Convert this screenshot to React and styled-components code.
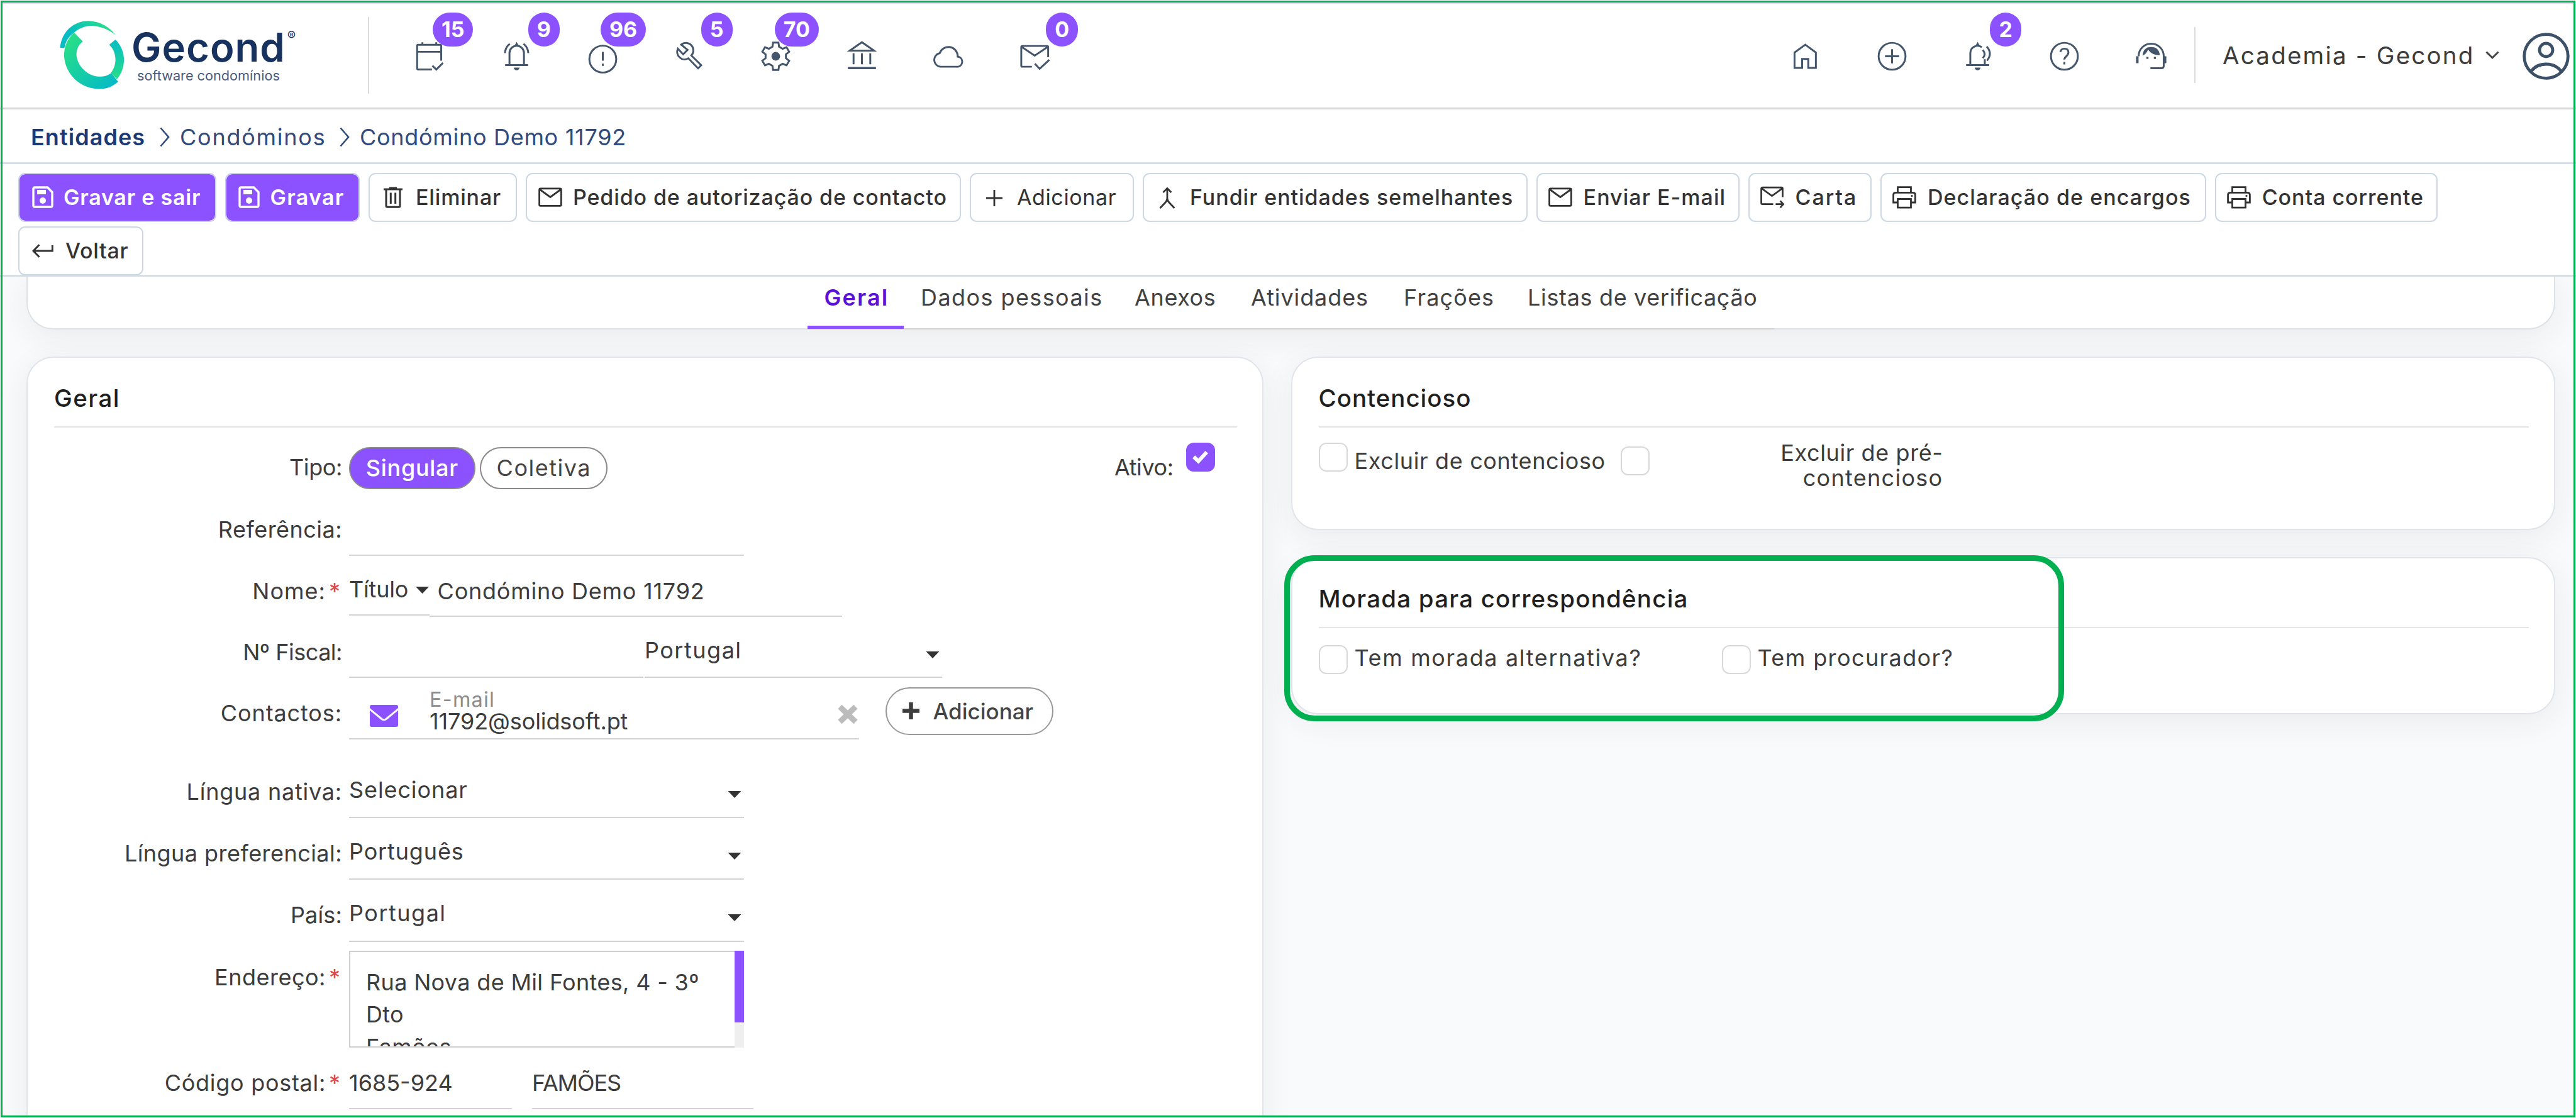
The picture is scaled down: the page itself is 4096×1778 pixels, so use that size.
import React from 'react';
import styled, { createGlobalStyle } from 'styled-components';

const NavIcon = ({ name }) => (
    <NavSvg viewBox="0 0 24 24">{navShapes[name]}</NavSvg>
);

const navShapes = {
    calendar: (
        <path d="M13.4 20.8H4.2Q3.5 20.8 3.5 20.1V5Q3.5 4.3 4.2 4.3H18.9Q19.6 4.3 19.6 5V14.9M3.5 9H19.6M7 2.6V4.3M16.3 2.6V4.3M13.7 18.3L16.3 20.9L20.8 16.4" />
    ),
    bell: (
        <>
            <path d="M7.2 17.9V9.8A4.85 4.85 0 0 1 16.9 9.8V17.9M4.3 17.9H19.7M7.4 3.6Q4.4 6 4.2 9.9M16.6 3.6Q19.6 6 19.8 9.9" />
            <path className="fill" d="M10 19.6H14Q13.5 21.4 12 21.4Q10.5 21.4 10 19.6ZM12 2.3L13.5 5H10.5Z" />
        </>
    ),
    alert: (
        <>
            <circle cx="12" cy="13.9" r="9" />
            <path d="M12 9.1V14.9M12 16.9V18.4" />
        </>
    ),
    wrench: (
        <path d="M6.8 4.2L11.1 7.7L8.1 10.7L4.6 6.9A5 5 0 0 0 11.6 13.4L18.1 20.1L20.2 18L13.6 11.5A5 5 0 0 0 6.8 4.2Z" />
    ),
    gear: (
        <>
            <path d="M10.2 2.8H13.8L14.2 5.6L16.6 7L19.2 5.9L21 9L18.8 10.7V13.3L21 15L19.2 18.1L16.6 17L14.2 18.4L13.8 21.2H10.2L9.8 18.4L7.4 17L4.8 18.1L3 15L5.2 13.3V10.7L3 9L4.8 5.9L7.4 7L9.8 5.6Z" />
            <circle className="fill" cx="12" cy="12" r="2.9" />
        </>
    ),
    bank: (
        <>
            <path d="M3.9 8.2L12 2.6L20.1 8.2ZM6.4 10V17.4M12 10V17.4M17.6 10V17.4" />
            <path d="M2.6 19.9H21.4" strokeWidth="1.5" />
        </>
    ),
    cloud: <path d="M6.6 19A4.6 4.6 0 0 1 6 9.9A6.2 6.2 0 0 1 18 11.3V12.2A3.45 3.45 0 0 1 18.3 19Z" />,
    mailCheck: (
        <path d="M10 19H3.6Q2.9 19 2.9 18.3V5.8Q2.9 5.1 3.6 5.1H20.2Q20.9 5.1 20.9 5.8V12.6M3.3 5.8L11.9 11.6L20.5 5.8M12 17L15.2 20.4L21.7 14.4" />
    ),
    home: <path d="M4.8 19.8V9.5L12 4.2L19.1 9.5V19.8H14V13.8H9.9V19.8Z" />,
    plus: (
        <>
            <circle cx="12" cy="12" r="9" />
            <path d="M12 7.3V16.7M7.3 12H16.7" />
        </>
    ),
    bellRing: (
        <>
            <path d="M6.7 17.9V9.8A4.9 4.9 0 0 1 14.4 5.9M16.4 14V17.9M3.9 17.9H19.3M15 7.8Q17.6 10.5 15 13.3M17.7 5.5Q21.8 10.2 17.9 14.9" />
            <path className="fill" d="M9.6 19.6H13.6Q13.1 21.4 11.6 21.4Q10.1 21.4 9.6 19.6ZM11.6 2.3L13.1 5H10.1Z" />
        </>
    ),
    help: (
        <>
            <circle cx="12" cy="12" r="9" />
            <path d="M9.3 9.2Q9.7 6.9 12 6.9Q14.7 6.9 14.7 9.4Q14.7 10.8 13.3 12Q12 13 12 14.2M12 15.8V17.5" />
        </>
    ),
    agent: (
        <>
            <path d="M3.6 12V11.8A8.4 8.2 0 0 1 20.4 11.8V18.4Q20.4 20 18.8 20H11.5" />
            <path d="M2.7 12V16.6M21.3 12V16.6" strokeWidth="1.7" />
            <path className="fill" d="M6.2 11.6Q8.8 10.6 9.9 7.6Q12.4 11.3 17.8 11.3Q17.2 5.8 12 5.8Q6.7 5.8 6.2 11.6ZM8.8 12.4H10.2V13.8H8.8ZM13.8 12.4H15.2V13.8H13.8Z" />
        </>
    ),
};

const SaveIcon = () => (
    <svg width="34" height="35" viewBox="0 0 34 35" fill="none" stroke="currentColor" strokeWidth="3.4">
        <path d="M4 2H24.5L32 9.5V31Q32 33 30 33H4Q2 33 2 31V4Q2 2 4 2Z" />
        <path d="M8 9.5H22" strokeWidth="7" />
        <circle cx="17" cy="23" r="5" fill="currentColor" stroke="none" />
    </svg>
);

const TrashIcon = () => (
    <svg width="30" height="34" viewBox="0 0 30 34" fill="none" stroke="currentColor" strokeWidth="3">
        <path d="M0 4H30M9 2H21M4 4V30.5Q4 32.3 6 32.3H24Q26 32.3 26 30.5V4M11.3 9.5V27M18.7 9.5V27" />
    </svg>
);

const MailIcon = () => (
    <svg width="38" height="31" viewBox="0 0 38 31" fill="none" stroke="currentColor" strokeWidth="2.8">
        <path d="M3.5 1.8H34.5Q36.4 1.8 36.4 3.7V27.5Q36.4 29.3 34.5 29.3H3.5Q1.6 29.3 1.6 27.5V3.7Q1.6 1.8 3.5 1.8ZM2.5 3.5L19 15.5L35.5 3.5" />
    </svg>
);

const LetterIcon = () => (
    <svg width="40" height="36" viewBox="0 0 40 36" fill="none" stroke="currentColor" strokeWidth="2.8">
        <path d="M21 29H3.5Q1.6 29 1.6 27V3.7Q1.6 1.8 3.5 1.8H34.5Q36.4 1.8 36.4 3.7V17.5M2.5 3.5L19 15.5L35.5 3.5M25 29H37M32.5 23.5L37.5 29L32.5 34.5" />
    </svg>
);

const PlusIcon = () => (
    <svg width="26" height="28" viewBox="0 0 26 28" fill="none" stroke="currentColor" strokeWidth="2.8">
        <path d="M13 2V28M0 15H26" />
    </svg>
);

const MergeIcon = () => (
    <svg width="26" height="38" viewBox="0 0 26 38" fill="none" stroke="currentColor" strokeWidth="2.8">
        <path d="M6.5 11L13 4.5L19.5 11M13 5V20Q13 24 10 27L1.5 36M13 20Q13 24 16 27L24.5 36" />
    </svg>
);

const PrinterIcon = () => (
    <svg width="38" height="36" viewBox="0 0 38 36" fill="none" stroke="currentColor" strokeWidth="2.8">
        <path d="M8.5 10V1.6H29.5V10M8.5 26H1.6V14Q1.6 10.3 5.3 10.3H32.7Q36.4 10.3 36.4 14V26H29.5M8.5 20.5H29.5V34.2H8.5Z" />
        <circle cx="31" cy="15.5" r="1.6" fill="currentColor" stroke="none" />
    </svg>
);

const ReturnIcon = () => (
    <svg width="34" height="22" viewBox="0 0 34 22" fill="none" stroke="currentColor" strokeWidth="2.9">
        <path d="M11.5 1.2L2 11L11.5 20.8M2 11H32.3V2" />
    </svg>
);

const LogoMark = () => (
    <svg width="107" height="113" viewBox="30 45 345 365">
        <defs>
            <linearGradient id="ringMain" x1="0" y1="0" x2="1" y2="1">
                <stop offset="0.1" stopColor="#27de88" />
                <stop offset="0.9" stopColor="#06bcc4" />
            </linearGradient>
            <linearGradient id="ringTop" x1="0" y1="0.4" x2="1" y2="0">
                <stop offset="0.15" stopColor="#06bcc4" />
                <stop offset="0.85" stopColor="#27de88" />
            </linearGradient>
            <linearGradient id="ringSide" x1="0" y1="0" x2="0" y2="1">
                <stop offset="0" stopColor="#06bcc4" />
                <stop offset="1" stopColor="#27de88" />
            </linearGradient>
        </defs>
        <path fill="url(#ringTop)" d="M38 190C45 110 105 52 185 52C245 54 295 85 322 125C290 95 240 78 200 77C165 78 135 90 110 112C80 135 65 160 60 192Z" />
        <path fill="url(#ringSide)" d="M322 148C350 175 366 215 366 250C366 290 352 325 330 352L298 320C315 300 324 270 322 245C320 215 308 190 290 175Z" />
        <path fill="url(#ringMain)" d="M110 112C70 150 50 200 62 260C80 340 150 402 240 402C280 402 310 388 336 364L300 320C280 335 260 340 235 338C180 335 125 285 122 225C122 195 135 172 155 158Z" />
    </svg>
);

const leftNav = [
    { icon: 'calendar', badge: 15 },
    { icon: 'bell', badge: 9 },
    { icon: 'alert', badge: 96 },
    { icon: 'wrench', badge: 5 },
    { icon: 'gear', badge: 70 },
    { icon: 'bank' },
    { icon: 'cloud' },
    { icon: 'mailCheck', badge: 0 },
];

const rightNav = [
    { icon: 'home' },
    { icon: 'plus' },
    { icon: 'bellRing', badge: 2 },
    { icon: 'help' },
    { icon: 'agent' },
];

const actions = [
    { label: 'Gravar e sair', Icon: SaveIcon, width: 314.5, spacing: 0.77, primary: true },
    { label: 'Gravar', Icon: SaveIcon, width: 214.5, spacing: 1.28, primary: true },
    { label: 'Eliminar', Icon: TrashIcon, width: 236, spacing: 0.84 },
    { label: 'Pedido de autorização de contacto', Icon: MailIcon, width: 692, spacing: 0.88 },
    { label: 'Adicionar', Icon: PlusIcon, width: 261, spacing: 0.62, light: true },
    { label: 'Fundir entidades semelhantes', Icon: MergeIcon, width: 611.6, spacing: 0.95 },
    { label: 'Enviar E-mail', Icon: MailIcon, width: 323, spacing: 1.05 },
    { label: 'Carta', Icon: LetterIcon, width: 196.3, spacing: 1.9 },
    { label: 'Declaração de encargos', Icon: PrinterIcon, width: 517.8, spacing: 1.08 },
    { label: 'Conta corrente', Icon: PrinterIcon, width: 354.6, spacing: 0.95 },
    { label: 'Voltar', Icon: ReturnIcon, width: 199, spacing: 0.74 },
];

const tabs = [
    { label: 'Geral', width: 153.6, spacing: 2.1, active: true },
    { label: 'Dados pessoais', width: 340, spacing: 1.4 },
    { label: 'Anexos', width: 185, spacing: 0.6 },
    { label: 'Atividades', width: 243, spacing: 0.9 },
    { label: 'Frações', width: 197, spacing: 1.15 },
    { label: 'Listas de verificação', width: 419.4, spacing: 0.65 },
];

const NavList = ({ items }) => (
    <Nav>
        {items.map(({ icon, badge }) => (
            <NavItem key={icon}>
                <NavIcon name={icon} />
                {badge !== undefined && <Badge>{badge}</Badge>}
            </NavItem>
        ))}
    </Nav>
);

const FieldLabel = ({ children, spacing, required }) => (
    <Label $spacing={spacing}>
        {children}
        {required && <Required>*</Required>}
    </Label>
);

const SelectField = ({ value, width, spacing, compact }) => (
    <Select $width={width} $compact={compact}>
        <Value $spacing={spacing}>{value}</Value>
        <Caret $compact={compact} />
    </Select>
);

const App = () => {
    return (
        <Page>
            <GlobalStyle />
            <Header>
                <Logo>
                    <LogoMark />
                    <LogoText>
                        <Brand>Gecond<Registered>®</Registered></Brand>
                        <Tagline>software condomínios</Tagline>
                    </LogoText>
                </Logo>
                <HeaderDivider $height={122} />
                <LeftNavWrap>
                    <NavList items={leftNav} />
                </LeftNavWrap>
                <NavList items={rightNav} />
                <HeaderDivider $height={89} />
                <Account>Academia - Gecond</Account>
                <svg width="22" height="14" viewBox="0 0 22 14" fill="none" stroke="#444" strokeWidth="3">
                    <path d="M1.5 1.5L11 11L20.5 1.5" />
                </svg>
                <Avatar viewBox="0 0 75 75">
                    <circle cx="37.5" cy="37.5" r="34.8" />
                    <circle cx="37.5" cy="27.5" r="10.5" />
                    <path d="M13.5 61.5Q22 50 37.5 50Q53 50 61.5 61.5" />
                </Avatar>
            </Header>

            <Breadcrumb>
                <Crumb $bold $width={201} $spacing={1.06}>Entidades</Crumb>
                <CrumbArrow viewBox="0 0 16 32"><path d="M1.5 1.5L14 16L1.5 30.5" /></CrumbArrow>
                <Crumb $width={254} $spacing={1.75}>Condóminos</Crumb>
                <CrumbArrow viewBox="0 0 16 32"><path d="M1.5 1.5L14 16L1.5 30.5" /></CrumbArrow>
                <Crumb $spacing={0.7}>Condómino Demo 11792</Crumb>
            </Breadcrumb>

            <Toolbar>
                {actions.map(({ label, Icon, width, spacing, primary, light }) => (
                    <ActionButton key={label} $width={width} $spacing={spacing} $primary={primary} $light={light}>
                        <IconSlot $wide={!primary}><Icon /></IconSlot>
                        {label}
                    </ActionButton>
                ))}
            </Toolbar>

            <Main>
                <TabsCard>
                    <TabList>
                        {tabs.map(({ label, width, spacing, active }) => (
                            <Tab key={label} $width={width} $spacing={spacing} $active={active}>{label}</Tab>
                        ))}
                    </TabList>
                </TabsCard>

                <Columns>
                    <GeneralCard>
                        <CardTitle $spacing={1.8}>Geral</CardTitle>
                        <TypeRow>
                            <FieldLabel spacing={-0.4}>Tipo:</FieldLabel>
                            <Pill $width={200.6} $spacing={0.7} $active>Singular</Pill>
                            <Pill $width={203.4} $spacing={1.5}>Coletiva</Pill>
                            <ActiveLabel>Ativo:</ActiveLabel>
                            <Checkbox $checked $top={24.5}>
                                <svg width="25" height="22" viewBox="0 0 25 22" fill="none" stroke="#fff" strokeWidth="6">
                                    <path d="M2.2 10.5L9.5 17.5L22.8 3" />
                                </svg>
                            </Checkbox>
                        </TypeRow>
                        <FormRow $height={98}>
                            <FieldLabel spacing={0.47}>Referência:</FieldLabel>
                            <TextField $width={628} />
                        </FormRow>
                        <FormRow $height={97}>
                            <FieldLabel spacing={1} required>Nome:</FieldLabel>
                            <SelectField value="Título" width={127.6} spacing={-0.2} compact />
                            <TextField $width={656.5} $indent={13}>
                                <Value $spacing={0.75} $low>Condómino Demo 11792</Value>
                            </TextField>
                        </FormRow>
                        <FormRow $height={97}>
                            <FieldLabel spacing={-0.48}>Nº Fiscal:</FieldLabel>
                            <TextField $width={467.6} />
                            <SelectSpacer />
                            <SelectField value="Portugal" width={473} spacing={1.5} />
                        </FormRow>
                        <FormRow $height={98}>
                            <FieldLabel spacing={0.89}>Contactos:</FieldLabel>
                            <ContactBox>
                                <svg width="45" height="35" viewBox="0 0 45 35">
                                    <rect width="45" height="35" rx="3" fill="#8c52ff" />
                                    <path d="M-1 6L19 22.5Q22.5 25 26 22.5L46 6" fill="none" stroke="#fff" strokeWidth="3" />
                                </svg>
                                <ContactText>
                                    <ContactKind>E-mail</ContactKind>
                                    <ContactValue>11792@solidsoft.pt</ContactValue>
                                </ContactText>
                                <svg width="32" height="30" viewBox="0 0 32 30" fill="none" stroke="#bcbcbc" strokeWidth="9">
                                    <path d="M3.5 3L28.5 27M28.5 3L3.5 27" />
                                </svg>
                            </ContactBox>
                            <AddButton>
                                <svg width="27" height="27" viewBox="0 0 27 27" fill="none" stroke="#3d3d3d" strokeWidth="6.5">
                                    <path d="M13.5 0V27M0 13.5H27" />
                                </svg>
                                Adicionar
                            </AddButton>
                        </FormRow>
                        <RowGap />
                        <FormRow $height={98}>
                            <FieldLabel spacing={0.77}>Língua nativa:</FieldLabel>
                            <SelectField value="Selecionar" width={628} spacing={0.9} />
                        </FormRow>
                        <FormRow $height={98}>
                            <FieldLabel spacing={0.45}>Língua preferencial:</FieldLabel>
                            <SelectField value="Português" width={628} spacing={0.85} />
                        </FormRow>
                        <FormRow $height={99}>
                            <FieldLabel spacing={0.15}>País:</FieldLabel>
                            <SelectField value="Portugal" width={628} spacing={1.5} />
                        </FormRow>
                        <FormRow $height={168}>
                            <FieldLabel spacing={0.5} required>Endereço:</FieldLabel>
                            <AddressBox>
                                <AddressText>{'Rua Nova de Mil Fontes, 4 - 3º\nDto\nFamões'}</AddressText>
                                <ScrollTrack><ScrollThumb /></ScrollTrack>
                            </AddressBox>
                        </FormRow>
                        <FormRow $height={98}>
                            <FieldLabel spacing={0.7} required>Código postal:</FieldLabel>
                            <TextField $width={259}><Value $low>1685-924</Value></TextField>
                            <PostalGap />
                            <TextField $width={352}><Value $low $spacing={-1.1}>FAMÕES</Value></TextField>
                        </FormRow>
                    </GeneralCard>

                    <SideColumn>
                        <Card $height={276.5}>
                            <CardTitle $spacing={1.2}>Contencioso</CardTitle>
                            <CheckRow>
                                <Checkbox $top={24.5} />
                                <CheckLabel $top={31} $width={423} $spacing={0.64}>Excluir de contencioso</CheckLabel>
                                <Checkbox $top={30.5} />
                                <WrappedLabel>Excluir de pré-<br /><span>contencioso</span></WrappedLabel>
                            </CheckRow>
                        </Card>
                        <Card $height={249.5}>
                            <CardTitle $spacing={1.5}>Morada para correspondência</CardTitle>
                            <CheckRow>
                                <Checkbox $top={26.5} />
                                <CheckLabel $top={25} $width={584} $spacing={1.65}>Tem morada alternativa?</CheckLabel>
                                <Checkbox $top={26.5} />
                                <CheckLabel $top={25} $spacing={1.4}>Tem procurador?</CheckLabel>
                            </CheckRow>
                            <Highlight />
                        </Card>
                    </SideColumn>
                </Columns>
            </Main>
        </Page>
    );
};

export default App;

const GlobalStyle = createGlobalStyle`
    * {
        box-sizing: border-box;
    }

    body {
        margin: 0;
        background: #fff;
    }
`;

const Page = styled.div`
    position: relative;
    display: flex;
    flex-direction: column;
    width: 4096px;
    height: 1778px;
    overflow: hidden;
    background: #fff;
    font-family: Inter, "Liberation Sans", sans-serif;
    font-size: 36px;
    line-height: 44px;
    color: #3c3c3c;

    &::after {
        content: "";
        position: absolute;
        inset: 1px;
        border: 3px solid #00b050;
        box-shadow: inset 0 2px 0 #e4e0f2;
        pointer-events: none;
    }
`;

const Header = styled.header`
    display: flex;
    align-items: center;
    flex: none;
    height: 174px;
    padding: 4px 10px 0 93px;
    border-bottom: 3px solid #d6d6d6;
`;

const Logo = styled.div`
    display: flex;
    align-items: flex-start;
    width: 492px;
    height: 113px;
`;

const LogoText = styled.div`
    margin: 14px 0 0 9px;
    color: #17325f;
`;

const Brand = styled.div`
    display: flex;
    align-items: flex-start;
    height: 60px;
    font-size: 63.4px;
    font-weight: 600;
    letter-spacing: 1px;
    line-height: 60px;
`;

const Registered = styled.span`
    margin-left: 3px;
    font-size: 20px;
    font-weight: 400;
    letter-spacing: 0;
    line-height: 24px;
`;

const Tagline = styled.div`
    margin: 1px 0 0 9px;
    font-size: 21.7px;
    line-height: 28px;
    color: #4a5b7e;
`;

const HeaderDivider = styled.div`
    width: 2px;
    height: ${({ $height }) => $height}px;
    background: #dadada;
`;

const LeftNavWrap = styled.div`
    flex: 1;
    margin-left: 28px;
`;

const Nav = styled.nav`
    display: flex;
`;

const NavItem = styled.div`
    position: relative;
    display: flex;
    justify-content: center;
    align-items: center;
    width: 137.4px;
    height: 140px;
`;

const NavSvg = styled.svg`
    width: 57px;
    height: 57px;
    margin-top: 3px;
    fill: none;
    stroke: #44566c;
    stroke-width: 1.25;

    .fill {
        fill: #44566c;
        stroke: none;
    }
`;

const Badge = styled.span`
    position: absolute;
    top: 2px;
    right: 0;
    min-width: 50px;
    height: 54px;
    padding: 0 14px;
    border-radius: 27px;
    background: #8c52ff;
    color: #fff;
    font-size: 34px;
    font-weight: 700;
    line-height: 53px;
    text-align: center;
`;

const Account = styled.div`
    width: 461px;
    padding-left: 43px;
    font-size: 38.5px;
    letter-spacing: 2.2px;
    white-space: nowrap;
`;

const Avatar = styled.svg`
    width: 75px;
    height: 75px;
    margin: 3px 0 0 37px;
    fill: none;
    stroke: #3c5068;
    stroke-width: 4.8;
`;

const Breadcrumb = styled.div`
    display: flex;
    align-items: center;
    flex: none;
    height: 87px;
    padding: 4px 0 0 49px;
    border-bottom: 3px solid #d5dee8;
    color: #1f3d73;
`;

const Crumb = styled.span`
    width: ${({ $width }) => ($width ? `${$width}px` : 'auto')};
    margin-left: ${({ $bold }) => ($bold ? 0 : 16)}px;
    color: ${({ $bold }) => ($bold ? '#1b3a75' : '#2f4a7d')};
    font-weight: ${({ $bold }) => ($bold ? 600 : 400)};
    letter-spacing: ${({ $spacing }) => $spacing}px;
    white-space: nowrap;

    & + svg {
        margin-left: ${({ $bold }) => ($bold ? 4 : 0)}px;
    }
`;

const CrumbArrow = styled.svg`
    width: 16px;
    height: 32px;
    fill: none;
    stroke: #2f4a7d;
    stroke-width: 2.6;
`;

const Toolbar = styled.div`
    display: flex;
    flex-wrap: wrap;
    align-content: flex-start;
    flex: none;
    gap: 7px 14px;
    height: 179px;
    padding: 13.5px 60px 0 29px;
    border-bottom: 3px solid #d5dee4;
`;

const ActionButton = styled.button`
    display: flex;
    align-items: center;
    width: ${({ $width }) => $width}px;
    height: 78px;
    padding: 0 0 0 17px;
    border: 2px solid ${({ $primary }) => ($primary ? '#c9cfee' : '#cdd8e5')};
    border-radius: 11px;
    background: ${({ $primary }) => ($primary ? '#8c52ff' : '#fff')};
    background-clip: padding-box;
    color: ${({ $primary }) => ($primary ? '#fff' : '#333')};
    font-family: inherit;
    font-size: 34px;
    font-weight: ${({ $primary, $light }) => ($primary ? 600 : $light ? 400 : 500)};
    letter-spacing: ${({ $spacing }) => $spacing}px;
    white-space: nowrap;
`;

const IconSlot = styled.span`
    display: flex;
    justify-content: center;
    align-items: center;
    flex: none;
    width: 39px;
    margin-right: ${({ $wide }) => ($wide ? 17 : 14)}px;
`;

const Main = styled.main`
    flex: 1;
    min-height: 0;
    overflow: hidden;
    background: #f8fafc;
    padding: 0 33px 0 42px;
`;

const TabsCard = styled.div`
    display: flex;
    justify-content: center;
    height: 84px;
    border: 2px solid #dbe3e8;
    border-top: none;
    border-radius: 0 0 42px 42px;
    background: #fff;
    box-shadow: 0 12px 50px rgba(40, 40, 45, 0.07);
`;

const TabList = styled.div`
    display: flex;
    height: 84px;
    border-bottom: 2px solid #d2d2d2;
`;

const Tab = styled.div`
    width: ${({ $width }) => $width}px;
    height: 83px;
    padding: 11px 0 0 27px;
    border-bottom: ${({ $active }) => ($active ? '5px solid #8c52ff' : 'none')};
    color: ${({ $active }) => ($active ? '#5a12d6' : '#414141')};
    font-weight: ${({ $active }) => ($active ? 600 : 400)};
    letter-spacing: ${({ $spacing }) => $spacing}px;
    white-space: nowrap;
`;

const Columns = styled.div`
    display: flex;
    align-items: flex-start;
    gap: 43.5px;
    margin-top: 42.5px;
`;

const Card = styled.section`
    position: relative;
    height: ${({ $height }) => $height}px;
    padding: 39px 40px 0 42px;
    border: 2px solid #e1e5eb;
    border-radius: 43px;
    background: #fff;
    box-shadow: 0 12px 50px rgba(40, 40, 45, 0.07);
`;

const GeneralCard = styled(Card)`
    flex: none;
    width: 1967px;
    height: 1300px;
`;

const SideColumn = styled.div`
    display: flex;
    flex: 1;
    flex-direction: column;
    gap: 43px;
`;

const CardTitle = styled.h2`
    height: 72px;
    margin: 0;
    border-bottom: 2.5px solid #e4e4e4;
    color: #1f1f1f;
    font-size: 38.5px;
    font-weight: 500;
    letter-spacing: ${({ $spacing }) => $spacing * 0.8}px;
    line-height: 50px;
`;

const FormRow = styled.div`
    display: flex;
    align-items: flex-start;
    height: ${({ $height }) => $height}px;
`;

const Label = styled.label`
    flex: none;
    width: 458px;
    margin-right: 11px;
    padding-top: 34px;
    letter-spacing: ${({ $spacing }) => $spacing}px;
    text-align: right;
    white-space: nowrap;
`;

const Required = styled.span`
    margin: 0 3px 0 5px;
    color: #e04848;
    letter-spacing: 0;
`;

const TypeRow = styled(FormRow)`
    height: 106px;

    ${Label} {
        padding-top: 41px;
    }
`;

const Pill = styled.button`
    width: ${({ $width }) => $width}px;
    height: 67px;
    margin: 31px 7.5px 0 0;
    padding: 0;
    border: 2px solid #8a8a8a;
    border-radius: 34px;
    background: ${({ $active }) => ($active ? '#8c52ff' : '#fff')};
    color: ${({ $active }) => ($active ? '#fff' : '#444')};
    font-family: inherit;
    font-size: 36px;
    font-weight: ${({ $active }) => ($active ? 500 : 400)};
    letter-spacing: ${({ $spacing }) => $spacing}px;
`;

const ActiveLabel = styled.span`
    width: 114px;
    margin: 41px 0 0 798px;
    letter-spacing: -0.4px;
`;

const Checkbox = styled.span`
    display: flex;
    justify-content: center;
    align-items: center;
    flex: none;
    width: 46px;
    height: 46px;
    margin-top: ${({ $top }) => $top}px;
    border: ${({ $checked }) => ($checked ? 'none' : '2px solid #d9d9d9')};
    border-radius: 12px;
    background: ${({ $checked }) => ($checked ? '#8c52ff' : '#fff')};
`;

const TextField = styled.div`
    width: ${({ $width }) => $width}px;
    height: 100%;
    padding-left: ${({ $indent }) => $indent || 0}px;
    border-bottom: 2.5px solid #d3d3d3;
`;

const Select = styled.div`
    display: flex;
    justify-content: space-between;
    width: ${({ $width }) => $width}px;
    height: ${({ $compact }) => ($compact ? '95.5px' : '100%')};
    padding-right: ${({ $compact }) => ($compact ? 0 : 4)}px;
    border-bottom: 2.5px solid #d3d3d3;
`;

const Value = styled.span`
    display: block;
    padding-top: ${({ $low }) => ($low ? 34 : 31)}px;
    letter-spacing: ${({ $spacing }) => $spacing || 0}px;
    white-space: nowrap;
`;

const Caret = styled.span`
    flex: none;
    width: 22px;
    height: 11.5px;
    margin-top: ${({ $compact }) => ($compact ? 49 : 55)}px;
    background: #333;
    clip-path: polygon(0 0, 100% 0, 50% 100%);
`;

const SelectSpacer = styled.span`
    width: 2.4px;
`;

const ContactBox = styled.div`
    display: flex;
    align-items: flex-start;
    width: 811px;
    height: 100%;
    padding: 0 2px 0 33px;
    border-bottom: 2.5px solid #d3d3d3;

    > svg {
        flex: none;
        margin-top: 43px;
    }
`;

const ContactText = styled.div`
    flex: 1;
    padding: 17px 0 0 50px;
`;

const ContactKind = styled.div`
    color: #8c8c8c;
    font-size: 32.5px;
    letter-spacing: 1.2px;
    line-height: 35px;
`;

const ContactValue = styled.div`
    letter-spacing: -0.1px;
    line-height: 34px;
`;

const AddButton = styled.button`
    display: flex;
    align-items: center;
    width: 267px;
    height: 76px;
    margin: 15px 0 0 41.5px;
    padding: 0 0 0 25px;
    gap: 22px;
    border: 2px solid #999;
    border-radius: 38px;
    background: #fff;
    color: #444;
    font-family: inherit;
    font-size: 35px;
    font-weight: 500;
`;

const RowGap = styled.div`
    height: 27px;
`;

const PostalGap = styled.span`
    width: 32px;
`;

const AddressBox = styled.div`
    display: flex;
    width: 628px;
    height: 154px;
    margin-top: 14px;
    overflow: hidden;
`;

const AddressText = styled.div`
    flex: 1;
    padding: 23px 0 0 25px;
    overflow: hidden;
    border: 2px solid #cfcfcf;
    border-right: none;
    letter-spacing: 0.34px;
    line-height: 51.5px;
    white-space: pre;
`;

const ScrollTrack = styled.div`
    width: 15px;
    background: #efefef;
`;

const ScrollThumb = styled.div`
    height: 114px;
    background: #8c52ff;
`;

const CheckRow = styled.div`
    display: flex;
    align-items: flex-start;
`;

const CheckLabel = styled.span`
    width: ${({ $width }) => ($width ? `${$width}px` : 'auto')};
    margin: ${({ $top }) => $top}px 0 0 11px;
    letter-spacing: ${({ $spacing }) => $spacing}px;
    white-space: nowrap;
`;

const WrappedLabel = styled.span`
    width: 260px;
    margin: 20px 0 0 207px;
    letter-spacing: 0.6px;
    line-height: 40px;
    text-align: right;
    white-space: nowrap;

    span {
        letter-spacing: 1.3px;
    }
`;

const Highlight = styled.div`
    position: absolute;
    top: -5px;
    left: -13px;
    width: 1240px;
    height: 264px;
    border: 9.5px solid #00b050;
    border-radius: 48px;
`;
